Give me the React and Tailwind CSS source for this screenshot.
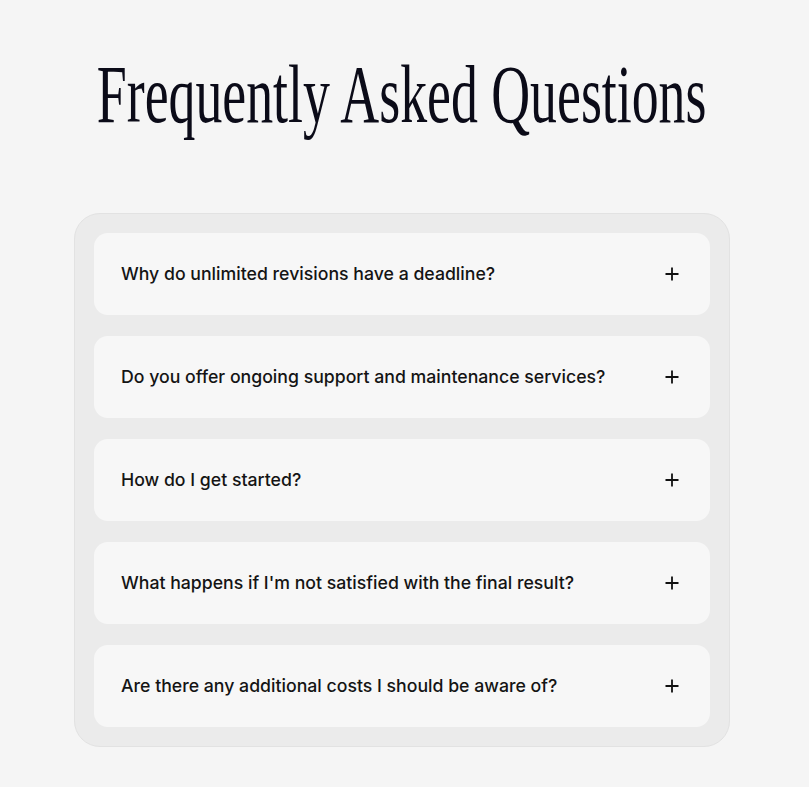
import React, { useState } from 'react';

const faqs = [
  {
    q: 'Why do unlimited revisions have a deadline?',
    a: 'Revisions are open for the duration of the project so we can keep timelines predictable and deliver on schedule.',
  },
  {
    q: 'Do you offer ongoing support and maintenance services?',
    a: 'Yes. We offer monthly support plans covering updates, fixes and small improvements.',
  },
  {
    q: 'How do I get started?',
    a: 'Book a call with us and we will walk you through the process and next steps.',
  },
  {
    q: "What happens if I'm not satisfied with the final result?",
    a: 'We keep iterating with you until the result is right for your business.',
  },
  {
    q: 'Are there any additional costs I should be aware of?',
    a: 'No hidden fees. Everything is agreed upfront before the work begins.',
  },
];

function PlusIcon() {
  return (
    <svg width="16" height="16" viewBox="0 0 16 16" fill="none" className="shrink-0">
      <path d="M8 1.5v13M1.5 8h13" stroke="#111111" strokeWidth="1.8" />
    </svg>
  );
}

function FaqItem({ item, open, onToggle }) {
  return (
    <div className="rounded-[14px] bg-[#f7f7f7]">
      <button
        onClick={onToggle}
        className="flex h-[82px] w-full items-center justify-between pl-[27px] pr-[30px] text-left"
      >
        <span className="text-[17.7px] font-medium text-[#141414]">{item.q}</span>
        <PlusIcon />
      </button>
      {open && (
        <div className="px-[27px] pb-6 text-[15px] leading-6 text-[#555]">{item.a}</div>
      )}
    </div>
  );
}

export default function App() {
  const [openIdx, setOpenIdx] = useState(null);

  return (
    <div
      className="min-h-screen bg-[#f5f5f5] pt-[54px] pr-[5px] pb-10"
      style={{ fontFamily: 'Inter, "Noto Sans", sans-serif' }}
    >
      <div className="flex justify-center">
        <h1
          className="scale-x-[0.656] whitespace-nowrap text-[82px] leading-none text-[#0b0b18]"
          style={{ fontFamily: '"Liberation Serif", "DejaVu Serif", serif' }}
        >
          Frequently Asked Questions
        </h1>
      </div>

      <div className="mx-auto mt-[77px] flex w-[656px] flex-col gap-[21px] rounded-[26px] border border-[#e2e2e2] bg-[#ebebeb] p-[19px]">
        {faqs.map((item, i) => (
          <FaqItem
            key={i}
            item={item}
            open={openIdx === i}
            onToggle={() => setOpenIdx(openIdx === i ? null : i)}
          />
        ))}
      </div>
    </div>
  );
}
